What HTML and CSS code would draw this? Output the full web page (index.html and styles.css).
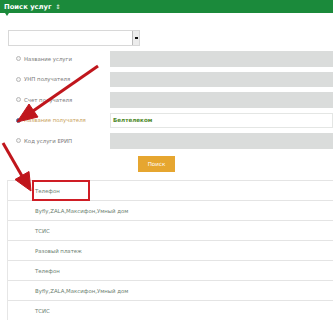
FILE: index.html
```html
<!DOCTYPE html>
<html lang="ru">
<head>
<meta charset="utf-8">
<title>Поиск услуг</title>
<link rel="stylesheet" href="styles.css">
</head>
<body>
<div class="page">
  <header class="bar"><span class="title">Поиск услуг</span><span class="sort">⇕</span></header>
  <div class="form">
    <div class="select"><span class="drop"><i></i></span></div>
    <div class="grid">
      <div class="opt"><span class="radio"></span>Название услуги</div><div class="field"></div>
      <div class="opt"><span class="radio"></span>УНП получателя</div><div class="field"></div>
      <div class="opt"><span class="radio"></span>Счет получателя</div><div class="field"></div>
      <div class="opt active"><span class="radio on"></span>Название получателя</div><div class="field filled">Белтелеком</div>
      <div class="opt"><span class="radio"></span>Код услуги ЕРИП</div><div class="field"></div>
    </div>
    <div class="actions"><button class="btn">Поиск</button></div>
  </div>
  <ul class="list">
    <li>Телефон</li>
    <li>Byfly,ZALA,Максифон,Умный дом</li>
    <li>ТСИС</li>
    <li>Разовый платеж</li>
    <li>Телефон</li>
    <li>Byfly,ZALA,Максифон,Умный дом</li>
    <li>ТСИС</li>
  </ul>
  <svg class="annot" width="333" height="320" viewBox="0 0 333 320">
    <g fill="#c0161c" stroke="#c0161c">
      <line x1="98" y1="66" x2="33" y2="111" stroke-width="3"/>
      <polygon points="17,122 38,117 29,104" stroke-width="1" stroke-linejoin="round"/>
      <line x1="3" y1="143" x2="22" y2="176" stroke-width="3"/>
      <polygon points="31,191 29,171.5 15,179.5" stroke-width="1" stroke-linejoin="round"/>
    </g>
    <rect x="33" y="181" width="56" height="19" fill="none" stroke="#cf1d25" stroke-width="2"/>
  </svg>
</div>
</body>
</html>
```

FILE: styles.css
```css
* { box-sizing: border-box; }
html, body { margin: 0; padding: 0; background: #fff; }
body { font-family: "DejaVu Sans", Verdana, sans-serif; overflow: hidden; }
.page { position: relative; width: 333px; height: 320px; overflow: hidden; }

.bar {
  position: relative;
  height: 13px;
  background: #1b8a3b;
  color: #fff;
  display: flex;
  align-items: center;
  gap: 4px;
  padding-left: 4px;
  font-size: 6.8px;
  font-weight: bold;
}
.bar::after {
  content: "";
  position: absolute;
  left: 5px;
  top: 13px;
  border-left: 2.5px solid transparent;
  border-right: 2.5px solid transparent;
  border-top: 3px solid #1b8a3b;
}
.sort { font-size: 6px; font-weight: normal; }

.form { padding-top: 17px; }
.select {
  margin-left: 8px;
  width: 132px;
  height: 16px;
  border: 1px solid #d8d8d8;
  background: #fff;
  display: flex;
  justify-content: flex-end;
}
.drop {
  width: 7px;
  height: 14px;
  border-left: 1px solid #bbb;
  background: #ececec;
  display: flex;
  align-items: center;
  justify-content: center;
}
.drop i { display: block; width: 3px; height: 2px; background: #111; }

.grid {
  margin-top: 5px;
  padding-left: 16px;
  display: grid;
  grid-template-columns: 94px 223px;
  grid-auto-rows: 15.5px;
  row-gap: 5px;
}
.opt {
  display: flex;
  align-items: center;
  gap: 3px;
  font-size: 5.4px;
  color: #7a7a7a;
  white-space: nowrap;
}
.opt.active { color: #c9a25a; }
.radio {
  width: 5px;
  height: 5px;
  border-radius: 50%;
  border: 1px solid #b8b8b8;
  background: #f4f4f4;
  flex: none;
}
.radio.on { background: #2d3f7a; border-color: #6a7aa0; }
.field { background: #dadcdb; }
.field.filled {
  background: #fff;
  border: 1px solid #e4e6e4;
  color: #4f8a2c;
  font-weight: bold;
  font-size: 5.6px;
  display: flex;
  align-items: center;
  padding-left: 2px;
}

.actions { margin-top: 7.5px; padding-left: 138px; display: flex; }
.btn {
  width: 37px;
  height: 16px;
  border: none;
  padding: 0;
  background: #e6a630;
  color: #fff;
  font-family: inherit;
  font-size: 5.6px;
}

.list {
  list-style: none;
  margin: 8px 0 0 7px;
  padding: 0;
  border-left: 1px solid #e6e6e6;
}
.list li {
  height: 20px;
  border-top: 1.5px solid #e4e4e4;
  display: flex;
  align-items: center;
  padding-left: 27px;
  font-size: 5.4px;
  color: #6d7f72;
  white-space: nowrap;
}

.annot { position: absolute; left: 0; top: 0; pointer-events: none; }
```
